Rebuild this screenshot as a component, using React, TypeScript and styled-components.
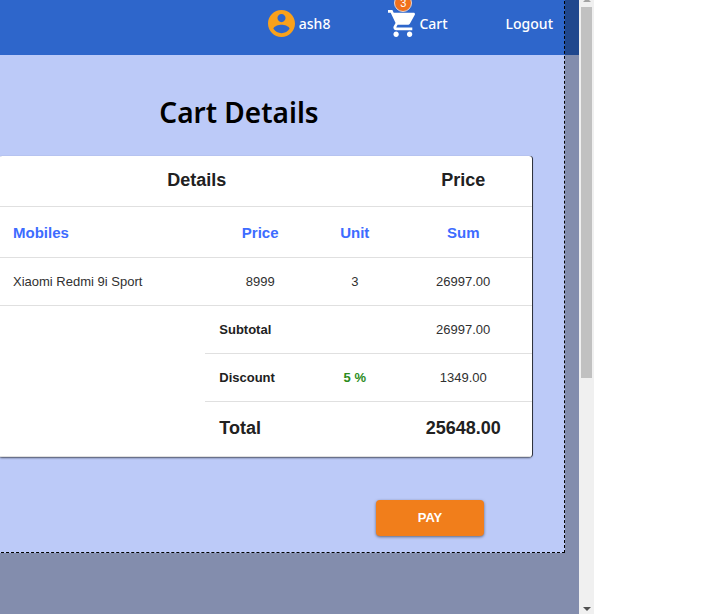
import React from "react";
import styled, { createGlobalStyle } from "styled-components";

const GlobalStyle = createGlobalStyle`
  *, *::before, *::after { box-sizing: border-box; }
  body {
    margin: 0;
    background: #ffffff;
    font-family: "Liberation Sans", Arial, sans-serif;
    color: #212121;
  }
`;

const Screen = styled.div`
  display: flex;
  height: 100vh;
  padding-right: 118px;
  overflow: hidden;
`;

const Page = styled.div`
  position: relative;
  flex: 1;
  min-width: 0;
  overflow: hidden;
  background: #bccaf8;
`;

const NavBar = styled.header`
  display: flex;
  align-items: center;
  justify-content: flex-end;
  gap: 58px;
  height: 55px;
  padding: 0 26px 8px 0;
  background: #2e66cb;
`;

const NavLink = styled.a`
  display: flex;
  align-items: center;
  gap: 4px;
  color: #ffffff;
  font: 500 14px/20px "Noto Sans", sans-serif;
  text-decoration: none;
`;

const CartIconWrap = styled.span`
  position: relative;
  display: flex;
`;

const Badge = styled.span`
  position: absolute;
  top: -16px;
  right: 3px;
  width: 18px;
  height: 18px;
  border: 1px solid #e9d5d0;
  border-radius: 50%;
  background: #f0701c;
  color: #ffffff;
  font: 400 11px/16px "Liberation Sans", Arial, sans-serif;
  text-align: center;
`;

const Content = styled.main`
  display: flex;
  flex-direction: column;
  padding: 37px 47px 0 0;
`;

const Heading = styled.h1`
  margin: 0 0 23px;
  padding-right: 54px;
  color: #000000;
  font: 600 28px/41px "Noto Sans", sans-serif;
  text-align: center;
`;

const TableCard = styled.div`
  margin-left: -1px;
  overflow: hidden;
  border-radius: 3px;
  background: #ffffff;
  box-shadow: 1px 0 0 rgba(0, 0, 0, 0.7), 0 1px 2px rgba(0, 0, 0, 0.6);
`;

const Table = styled.table`
  width: 100%;
  table-layout: fixed;
  border-collapse: collapse;
`;

const Column = styled.col<{ $share: string }>`
  width: ${(p) => p.$share};
`;

type Tone = "title" | "label" | "body" | "strong" | "discount";

const tones: Record<Tone, string> = {
  title: "color: #212121; font-size: 18px; font-weight: 700; padding-top: 14px; padding-bottom: 16px;",
  label: "color: #3d6cff; font-size: 15px; font-weight: 700; padding-top: 16px; padding-bottom: 14px;",
  body: "color: #303030; font-size: 13px; font-weight: 400;",
  strong: "color: #212121; font-size: 13px; font-weight: 700;",
  discount: "color: #2c8c1c; font-size: 13px; font-weight: 700;",
};

const cellStyle = `
  padding: 14px 14px 13px;
  border-bottom: 1px solid #e0e0e0;
  line-height: 20px;
`;

const HeadCell = styled.th<{ $tone: Tone; $left?: boolean }>`
  ${cellStyle}
  ${(p) => tones[p.$tone]}
  text-align: ${(p) => (p.$left ? "left" : "center")};
`;

const Cell = styled.td<{ $tone: Tone; $left?: boolean }>`
  ${cellStyle}
  ${(p) => tones[p.$tone]}
  text-align: ${(p) => (p.$left ? "left" : "center")};
`;

const TotalRow = styled.tr`
  & > * {
    padding-top: 16px;
    padding-bottom: 18px;
  }
`;

const PayButton = styled.button`
  align-self: flex-end;
  width: 108px;
  height: 36px;
  margin: 43px 48px 0 0;
  border: 0;
  border-radius: 4px;
  background: #f17e1b;
  color: #ffffff;
  box-shadow: 0 1px 3px rgba(0, 0, 0, 0.5);
  font: 700 13px/20px "Liberation Sans", Arial, sans-serif;
`;

const Selection = styled.div`
  position: absolute;
  inset: -4px 14px 61px -4px;
  border: 1px dashed #000000;
  box-shadow: 0 0 0 1000px rgba(0, 0, 0, 0.3);
  pointer-events: none;
`;

const ScrollTrack = styled.div`
  display: flex;
  flex-direction: column;
  width: 15px;
  padding: 0 2px;
  background: #f0f0f0;
`;

const ScrollArrow = styled.span<{ $up?: boolean }>`
  align-self: center;
  margin: ${(p) => (p.$up ? "-2px 0 0" : "auto 0 3px")};
  border: 4px solid transparent;
  border-width: ${(p) => (p.$up ? "0 4px 4px" : "4px 4px 0")};
  border-color: ${(p) => (p.$up ? "#a3a3a3 transparent" : "#505050 transparent")};
`;

const ScrollThumb = styled.div`
  height: 60.5%;
  margin-top: 5px;
  background: #c1c1c1;
`;

const items = [{ name: "Xiaomi Redmi 9i Sport", price: "8999", unit: "3", sum: "26997.00" }];

export default function App() {
  return (
    <>
      <GlobalStyle />
      <Screen>
        <Page>
          <NavBar>
            <NavLink href="#account">
              <svg width="27" height="27" viewBox="2 2 20 20" fill="#f9a11b" aria-hidden="true">
                <path d="M12 2C6.48 2 2 6.48 2 12s4.48 10 10 10 10-4.48 10-10S17.52 2 12 2zm0 3c1.66 0 3 1.34 3 3s-1.34 3-3 3-3-1.34-3-3 1.34-3 3-3zm0 14.2c-2.5 0-4.71-1.28-6-3.22.03-1.99 4-3.08 6-3.08 1.99 0 5.97 1.09 6 3.08-1.29 1.94-3.5 3.22-6 3.22z" />
              </svg>
              ash8
            </NavLink>
            <NavLink href="#cart">
              <CartIconWrap>
                <svg width="27" height="27" viewBox="1 2 20 20" fill="#ffffff" aria-hidden="true">
                  <path d="M7 18c-1.1 0-1.99.9-1.99 2S5.9 22 7 22s2-.9 2-2-.9-2-2-2zM1 2v2h2l3.6 7.59-1.35 2.45c-.16.28-.25.61-.25.96 0 1.1.9 2 2 2h12v-2H7.42c-.14 0-.25-.11-.25-.25l.03-.12.9-1.63h7.45c.75 0 1.41-.41 1.75-1.03l3.58-6.49c.08-.14.12-.31.12-.48 0-.55-.45-1-1-1H5.21l-.94-2H1zm16 16c-1.1 0-1.99.9-1.99 2s.89 2 1.99 2 2-.9 2-2-.9-2-2-2z" />
                </svg>
                <Badge>3</Badge>
              </CartIconWrap>
              Cart
            </NavLink>
            <NavLink href="#logout">Logout</NavLink>
          </NavBar>
          <Content>
            <Heading>Cart Details</Heading>
            <TableCard>
              <Table>
                <colgroup>
                  <Column $share="38.7%" />
                  <Column $share="20.6%" />
                  <Column $share="14.9%" />
                  <Column $share="25.8%" />
                </colgroup>
                <thead>
                  <tr>
                    <HeadCell $tone="title" colSpan={3}>Details</HeadCell>
                    <HeadCell $tone="title">Price</HeadCell>
                  </tr>
                  <tr>
                    <HeadCell $tone="label" $left>Mobiles</HeadCell>
                    <HeadCell $tone="label">Price</HeadCell>
                    <HeadCell $tone="label">Unit</HeadCell>
                    <HeadCell $tone="label">Sum</HeadCell>
                  </tr>
                </thead>
                <tbody>
                  {items.map((item) => (
                    <tr key={item.name}>
                      <Cell $tone="body" $left>{item.name}</Cell>
                      <Cell $tone="body">{item.price}</Cell>
                      <Cell $tone="body">{item.unit}</Cell>
                      <Cell $tone="body">{item.sum}</Cell>
                    </tr>
                  ))}
                  <tr>
                    <Cell $tone="body" rowSpan={3} />
                    <HeadCell $tone="strong" $left scope="row" colSpan={2}>Subtotal</HeadCell>
                    <Cell $tone="body">26997.00</Cell>
                  </tr>
                  <tr>
                    <HeadCell $tone="strong" $left scope="row">Discount</HeadCell>
                    <Cell $tone="discount">5 %</Cell>
                    <Cell $tone="body">1349.00</Cell>
                  </tr>
                  <TotalRow>
                    <HeadCell $tone="title" $left scope="row" colSpan={2}>Total</HeadCell>
                    <HeadCell as="td" $tone="title">25648.00</HeadCell>
                  </TotalRow>
                </tbody>
              </Table>
            </TableCard>
            <PayButton type="button">PAY</PayButton>
          </Content>
          <Selection />
        </Page>
        <ScrollTrack>
          <ScrollArrow $up />
          <ScrollThumb />
          <ScrollArrow />
        </ScrollTrack>
      </Screen>
    </>
  );
}
